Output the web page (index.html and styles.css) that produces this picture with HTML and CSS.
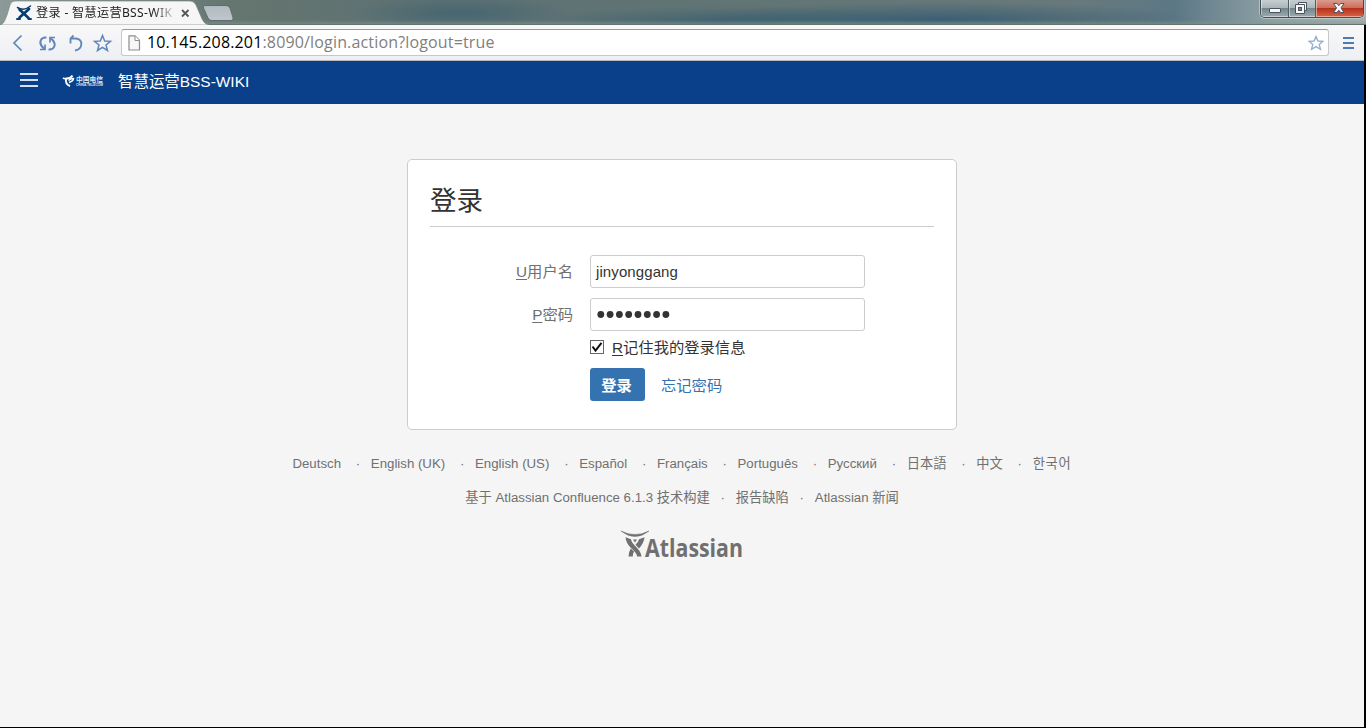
FILE: index.html
```html
<!DOCTYPE html>
<html lang="zh-CN">
<head>
<meta charset="utf-8">
<title>登录 - 智慧运营BSS-WIKI</title>
<link rel="stylesheet" href="styles.css">
</head>
<body>
<div class="window">
  <div class="tabstrip">
    <svg class="tab-shapes" width="240" height="25" viewBox="0 0 240 25">
      <defs>
        <linearGradient id="newtab" x1="0" y1="0" x2="0" y2="1"><stop offset="0" stop-color="#b0babe"/><stop offset="1" stop-color="#c0c7cd"/></linearGradient>
      </defs>
      <path d="M0 25C4 24 5 20 7 15L10 5Q11 1 15 1H190Q194 1 196 5L202 19Q204 24 209 25Z" fill="#f6f6f6" stroke="#7b8987" stroke-width=".7"/>
      <path d="M203.500 8Q202.500 5.500 205 5.500H226Q229 5.500 230 8L233 17.500Q233.500 20.500 231 20.500H212Q209 20.500 208 18Z" fill="url(#newtab)" stroke="#5d6d6f"/>
    </svg>
    <div class="tab">
      <svg class="favicon" width="16" height="16" viewBox="0 0 16 16" fill="none" stroke="#0a3b70" stroke-linecap="round">
        <path d="M1.500 2.500Q8 6.500 14.500 1" stroke-width="1.500"/>
        <path d="M3.500 4.500L12.500 13M13 4L3.500 12.500" stroke-width="2.700"/>
        <path d="M1 14H4M12.500 14H15" stroke-width="2"/>
      </svg>
      <span class="tab-title">登录 - 智慧运营BSS-WIK</span>
      <svg class="tab-close" width="9" height="9" viewBox="0 0 9 9"><path d="M1 1L7.500 7.500M7.500 1L1 7.500" stroke="#555" stroke-width="1.800"/></svg>
    </div>
    <div class="controls">
      <div class="control minimize"><svg width="28" height="17" viewBox="0 0 28 17"><rect x="8.500" y="8.500" width="11" height="4" rx=".5" fill="#f7f7f7" stroke="#4b5260"/></svg></div>
      <div class="control restore"><svg width="27" height="17" viewBox="0 0 27 17"><path d="M9.500 2.500H17.500V10.500H9.500Z" fill="#f7f7f7" stroke="#4b5260"/><path d="M6.500 4.500H15.500V13.500H6.500Z" fill="#f7f7f7" stroke="#4b5260"/><rect x="9.500" y="7.500" width="3" height="3" fill="#7b858d" stroke="#4b5260"/></svg></div>
      <div class="control close"><svg width="47" height="17" viewBox="0 0 47 17"><path d="M17.500 3.500H21L22.800 5.700L24.600 3.500H28L25 7.900L28 12.500H24.600L22.800 10.200L21 12.500H17.500L20.600 7.900Z" fill="#f7f7f7" stroke="#4e5364"/></svg></div>
    </div>
  </div>

  <div class="toolbar">
    <svg class="nav-icons" width="121" height="35" viewBox="0 0 121 35" fill="none" stroke="#5f87bc" stroke-width="2">
      <path d="M21.500 10.500L14 18L21.500 25.500" stroke-width="1.700"/>
      <path d="M46.500 12.500C40 12 39 18 42 21.500L44.500 24M48.500 24.500C55 25 56 19 53 15.500L50.500 13"/>
      <path d="M40 24.500H45V19.500M55 12.500H50V17.500" stroke-width="1.700"/>
      <path d="M70 13.500H76C83.500 14.500 83 24 75 25.500M70.500 18.500V13.500L73.500 10.500" stroke-width="1.800"/>
      <path d="M102.500 10.500L104.700 16L110.500 16.300L106 20L107.500 25.500L102.500 22.300L97.500 25.500L99 20L94.500 16.300L100.300 16Z" stroke-width="1.500"/>
    </svg>
    <div class="address">
      <svg class="page-icon" width="13" height="16" viewBox="0 0 13 16"><path d="M1 .8H7L11.500 5.300V15H1Z" fill="#f7f7f7" stroke="#8c8c8c" stroke-width="1.200"/><path d="M7 1V5.500H11.500" fill="#fff" stroke="#8c8c8c"/></svg>
      <span class="url"><span class="host">10.145.208.201</span>:8090/login.action?logout=true</span>
      <svg class="bookmark" width="16" height="16" viewBox="0 0 16 16"><path d="M8 1.500L9.900 6L15 6.300L11.200 9.500L12.500 14.300L8 11.600L3.500 14.300L4.800 9.500L1 6.300L6.100 6Z" fill="none" stroke="#91aed2" stroke-width="1.300"/></svg>
    </div>
    <svg class="menu" width="11" height="12" viewBox="0 0 11 12"><path d="M0 1H11M0 6H11M0 11H11" stroke="#4f7bb5" stroke-width="2"/></svg>
  </div>

  <header class="app-header">
    <svg class="app-menu" width="18" height="14" viewBox="0 0 18 14"><path d="M0 1H18M0 7H18M0 13H18" stroke="#d5e0ec" stroke-width="2"/></svg>
    <svg class="telecom" width="42" height="14" viewBox="0 0 42 14" fill="none" stroke="#fff">
      <path d="M1 4Q2.500 5 5 4.500Q9 4 10.500 1.500M4 5Q3 10 8 12" stroke-width="1.900"/>
      <path d="M6.500 6.500Q9 4 11.500 4.500Q11.500 7 7 8.500" stroke-width="1.500"/>
      <g fill="#dce6f2" stroke="none">
        <text class="telecom-cn" x="14" y="8.300" textLength="27" lengthAdjust="spacingAndGlyphs">中国电信</text>
        <text class="telecom-en" x="14" y="12" textLength="27" lengthAdjust="spacingAndGlyphs">CHINA TELECOM</text>
      </g>
    </svg>
    <span class="app-name">智慧运营BSS-WIKI</span>
  </header>

  <main class="content">
    <section class="login-card">
      <h1 class="login-title">登录</h1>
      <form class="login-form">
        <label class="label"><u>U</u>用户名</label>
        <div class="field">jinyonggang</div>
        <label class="label"><u>P</u>密码</label>
        <div class="field password"><svg width="74" height="9" viewBox="0 0 74 9" fill="#333"><circle cx="3.800" cy="4.500" r="3.400"/><circle cx="13.100" cy="4.500" r="3.400"/><circle cx="22.400" cy="4.500" r="3.400"/><circle cx="31.700" cy="4.500" r="3.400"/><circle cx="41" cy="4.500" r="3.400"/><circle cx="50.300" cy="4.500" r="3.400"/><circle cx="59.600" cy="4.500" r="3.400"/><circle cx="68.900" cy="4.500" r="3.400"/></svg></div>
        <div class="remember">
          <svg width="14" height="14" viewBox="0 0 14 14"><rect x=".5" y=".5" width="13" height="13" fill="#fff" stroke="#666"/><path d="M2.500 6.500L5.500 10.500L11.500 2.800" fill="none" stroke="#111" stroke-width="2"/></svg>
          <span class="remember-text"><u>R</u>记住我的登录信息</span>
        </div>
        <div class="actions">
          <span class="submit">登录</span>
          <a class="forgot">忘记密码</a>
        </div>
      </form>
    </section>

    <footer class="footer">
      <ul class="languages">
        <li>Deutsch</li><li>English (UK)</li><li>English (US)</li><li>Español</li><li>Français</li><li>Português</li><li>Русский</li><li>日本語</li><li>中文</li><li class="korean">한국어</li>
      </ul>
      <ul class="credits">
        <li>基于 Atlassian Confluence 6.1.3 技术构建</li><li>报告缺陷</li><li>Atlassian 新闻</li>
      </ul>
      <svg class="atlassian" width="134" height="46" viewBox="-5 -5 134 46" fill="#707070">
        <path d="M1 1Q15 8 29 1Q22 6.500 15 6.500Q8 6.500 1 1Z" stroke="#707070" stroke-width=".5"/>
        <path d="M5.500 7.300L11 9.300C11.500 13 15 15.500 17.500 18.500C20 21.500 21.200 23.500 21.500 26.500H17.200C16.500 22.500 13.500 20.500 10.500 17.500Q6 13 5.500 7.300Z"/>
        <path d="M24.500 7.300L19 9.300Q18.500 12 15.500 14.700L19 18.500Q24 13 24.500 7.300ZM10.800 18.500L14 21.500Q12.700 24 12.700 26.500H8.500Q8.500 22 10.800 18.500Z"/>
        <path d="M13 9.500H17L15 12.500Z"/>
        <text class="atlassian-name" x="25" y="26.500" textLength="98" lengthAdjust="spacingAndGlyphs">Atlassian</text>
      </svg>
    </footer>
  </main>
</div>
</body>
</html>
```
FILE: styles.css
```css
* { box-sizing: border-box; }
body {
  margin: 0;
  height: 728px;
  overflow: hidden;
  background: #000;
  color: #333;
  font-family: "Liberation Sans", "Noto Sans CJK SC", sans-serif;
}
svg { display: block; flex: none; }
.window { display: flex; flex-direction: column; height: 727px; }

.tabstrip {
  position: relative;
  display: flex;
  justify-content: space-between;
  flex: none;
  height: 25px;
  border-bottom: 1px solid #65736f;
  background:
    linear-gradient(to bottom, transparent 20px, rgba(130, 150, 140, .55) 24px),
    radial-gradient(ellipse 110px 16px at 460px 13px, rgba(55, 94, 110, .6), transparent),
    radial-gradient(ellipse 260px 18px at 940px 20px, rgba(50, 91, 115, .85), transparent),
    radial-gradient(ellipse 200px 16px at 730px 22px, rgba(50, 91, 110, .7), transparent),
    linear-gradient(to right, #8b9a98, #65756f 17%, #5d7174 32%, #627575 55%, #68797b 78%, #5c7885 86%, #8ea0a5 93%, #a3b0b0);
}
.tab-shapes { position: absolute; left: 0; top: 0; }
.tab { position: relative; display: flex; align-items: flex-start; width: 200px; padding: 5px 0 0 16px; }
.tab-title {
  width: 140px;
  margin-left: 4px;
  overflow: hidden;
  white-space: nowrap;
  font: 12.100px/16px "Noto Sans", "Noto Sans CJK SC", sans-serif;
  letter-spacing: .35px;
  color: #222;
  -webkit-mask-image: linear-gradient(to right, #000 117px, transparent 142px);
}
.tab-close { margin: 4px 0 0 5px; }
.controls {
  display: flex;
  width: 104px;
  height: 18px;
  margin-right: 2px;
  border: 1px solid #414c53;
  border-top: 0;
  border-radius: 0 0 5px 5px;
  box-shadow: 0 0 0 1px rgba(220, 232, 235, .5);
  overflow: hidden;
}
.control { background: linear-gradient(#c6ced0, #abb6ba 46%, #74868d 50%, #9eabb0); border-right: 1px solid #505d64; box-shadow: inset 1px -1px 0 rgba(255, 255, 255, .45); }
.minimize { width: 28px; }
.restore { width: 27px; }
.close { flex: 1; border: 0; background: linear-gradient(#d99b8d, #cd6d5b 46%, #b9301c 50%, #d66645); }

.toolbar {
  display: flex;
  align-items: center;
  flex: none;
  width: 1364px;
  height: 36px;
  background: linear-gradient(#f8f8f8, #eeeff4);
  border-bottom: 1px solid #b7bcc4;
}
.address {
  display: flex;
  align-items: center;
  width: 1208px;
  height: 27px;
  padding: 0 4px 0 6px;
  border: 1px solid #c6c8cc;
  border-top-color: #999;
  border-radius: 3px;
  background: #fff;
}
.url { flex: 1; margin: -2px 0 0 6px; font: 16px/24px "Open Sans", sans-serif; letter-spacing: .16px; color: #808080; white-space: nowrap; }
.host { color: #000; }
.menu { margin-left: 14px; }

.app-header {
  display: flex;
  align-items: center;
  flex: none;
  width: 1364px;
  height: 43px;
  padding: 0 0 2px 20px;
  background: #0a4089;
  border-bottom: 1px solid #2e3559;
  color: #fff;
}
.app-menu { margin-top: -2px; }
.telecom { margin-left: 24px; }
.telecom-cn { font: bold 7px "Noto Sans CJK SC", sans-serif; }
.telecom-en { font: bold 3.500px "Liberation Sans", sans-serif; }
.app-name { margin: 2px 0 0 14px; font-size: 15.450px; line-height: 20px; }

.content { flex: 1; width: 1364px; padding-top: 55px; background: #f5f5f5; }
.login-card {
  width: 550px;
  height: 271px;
  margin: 0 auto;
  padding: 22px 22px 0;
  border: 1px solid #ccc;
  border-radius: 5px;
  background: #fff;
}
.login-title { height: 45px; margin: 0; border-bottom: 1px solid #ccc; font-size: 26.500px; font-weight: 400; line-height: 38px; }
.login-form { display: grid; grid-template-columns: 143px 275px; column-gap: 17px; row-gap: 10px; margin-top: 28px; font-size: 15.300px; }
.label { text-align: right; line-height: 33px; color: #707070; }
u { text-underline-offset: 2px; text-decoration-thickness: 1px; }
.field { display: flex; align-items: center; height: 33px; padding: 0 0 1px 5px; border: 1px solid #ccc; border-radius: 3px; font-size: 15px; letter-spacing: .1px; }
.password { padding: 0 0 0 6px; }
.remember { grid-column: 2; display: flex; align-items: center; gap: 8px; height: 20px; margin-top: -4px; line-height: 20px; }
.remember-text { padding-top: 2px; }
.actions { grid-column: 2; display: flex; align-items: center; gap: 16px; height: 33px; margin-top: 1px; line-height: 33px; }
.submit { width: 55px; height: 33px; padding: 1px 2px 0 0; border-radius: 3px; background: #3572b0; color: #fff; font-weight: 700; line-height: 33px; text-align: center; }
.forgot { padding-top: 2px; color: #3572b0; }

.footer { display: flex; flex-direction: column; align-items: center; padding-top: 24px; color: #707070; font-size: 13.250px; line-height: 20px; }
.footer ul { display: flex; margin: 0; padding: 0; list-style: none; white-space: nowrap; }
.languages li + li::before { content: "·"; margin: 0 10.600px 0 14.800px; letter-spacing: 0; }
.credits li + li::before { content: "·"; margin: 0 10.800px; }
.footer .credits { margin-top: 14px; }
.korean { letter-spacing: .8px; }
.atlassian { margin-top: 17px; }
.atlassian-name { font: bold 25px/1 "Open Sans", sans-serif; }
```
